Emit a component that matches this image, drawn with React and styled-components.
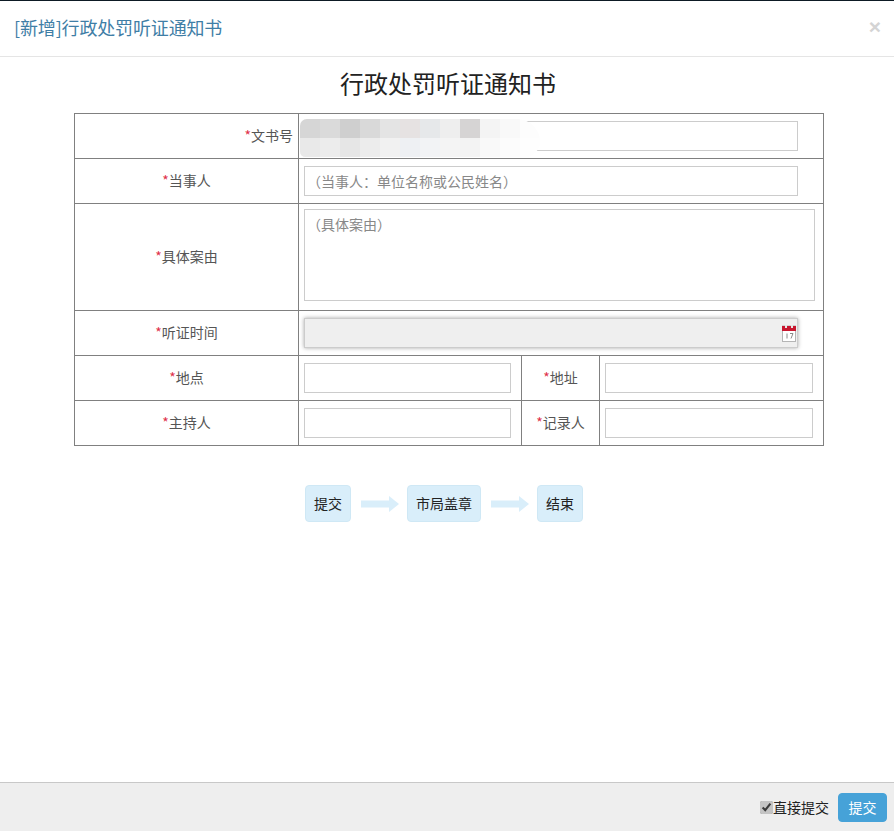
import React from "react";
import styled, { createGlobalStyle } from "styled-components";

const FONT = `"Microsoft YaHei", "Noto Sans CJK SC", "Liberation Sans", sans-serif`;

const GlobalStyle = createGlobalStyle`
  html, body {
    margin: 0;
    padding: 0;
    height: 100%;
    background: #fff;
    font-family: ${FONT};
  }
  * { box-sizing: border-box; }
`;

// grey blocks of the blurred-out document number
const mosaicRows = [
  ["#d6d6d6", "#dadada", "#cfcfcf", "#d9d9d9", "#e4e4e4", "#e6e2e2", "#e6e8ea", "#eeeeee", "#d6d4d4", "#f4f4f4", "#f9f9f9", "#fdfdfd"],
  ["#e9e9e9", "#ececec", "#e6e6e6", "#ececec", "#f1f1f1", "#eef0f3", "#f2f3f5", "#f4f4f4", "#f3f3f3", "#f9f9f9", "#fcfcfc", "#fefefe"],
];

export default function App() {
  return (
    <Modal>
      <GlobalStyle />
      <TopEdge />
      <Header>
        <Title>[新增]行政处罚听证通知书</Title>
        <CloseMark>×</CloseMark>
      </Header>
      <Body>
        <DocTitle>行政处罚听证通知书</DocTitle>
        <FormTable>
          <colgroup>
            <col style={{ width: 224 }} />
            <col style={{ width: 223 }} />
            <col style={{ width: 78 }} />
            <col style={{ width: 224 }} />
          </colgroup>
          <tbody>
            <Row $h={45}>
              <LabelCell $right><Req>*</Req>文书号</LabelCell>
              <FieldCell colSpan={3}>
                <BlurWrap>
                  <WideInput />
                  <Mosaic>
                    {mosaicRows.map((row, i) => (
                      <MosaicRow key={i}>
                        {row.map((c, j) => <MosaicBlock key={j} $c={c} />)}
                      </MosaicRow>
                    ))}
                  </Mosaic>
                </BlurWrap>
              </FieldCell>
            </Row>
            <Row $h={45}>
              <LabelCell><Req>*</Req>当事人</LabelCell>
              <FieldCell colSpan={3}>
                <WideInput placeholder="（当事人：单位名称或公民姓名）" />
              </FieldCell>
            </Row>
            <Row $h={107}>
              <LabelCell><Req>*</Req>具体案由</LabelCell>
              <AreaCell colSpan={3}>
                <Area placeholder="（具体案由）" />
              </AreaCell>
            </Row>
            <Row $h={45}>
              <LabelCell><Req>*</Req>听证时间</LabelCell>
              <FieldCell colSpan={3}>
                <DateWrap>
                  <DateInput disabled />
                  <CalendarIcon />
                </DateWrap>
              </FieldCell>
            </Row>
            <Row $h={45}>
              <LabelCell><Req>*</Req>地点</LabelCell>
              <FieldCell><HalfInput /></FieldCell>
              <LabelCell><Req>*</Req>地址</LabelCell>
              <FieldCell><HalfInput $wide /></FieldCell>
            </Row>
            <Row $h={45}>
              <LabelCell><Req>*</Req>主持人</LabelCell>
              <FieldCell><HalfInput /></FieldCell>
              <LabelCell><Req>*</Req>记录人</LabelCell>
              <FieldCell><HalfInput $wide /></FieldCell>
            </Row>
          </tbody>
        </FormTable>
        <Flow>
          <Step>提交</Step>
          <FlowArrow />
          <Step>市局盖章</Step>
          <FlowArrow />
          <Step>结束</Step>
        </Flow>
      </Body>
      <Footer>
        <CheckLabel>
          <Check type="checkbox" defaultChecked />
          直接提交
        </CheckLabel>
        <SubmitButton>提交</SubmitButton>
      </Footer>
    </Modal>
  );
}

function FlowArrow() {
  return (
    <ArrowSvg width="38" height="16" viewBox="0 0 38 16">
      <path d="M0 4.5h28V0l10 8-10 8v-4.5H0z" fill="#d9eefa" />
    </ArrowSvg>
  );
}

function CalendarIcon() {
  return (
    <CalSvg width="14" height="17" viewBox="0 0 14 17">
      <rect x="0.5" y="1" width="13" height="15.5" fill="#fff" stroke="#b5b5b5" />
      <rect x="0" y="1" width="14" height="5" fill="#c8162e" />
      <rect x="3" y="0" width="2" height="3" fill="#e6e6e6" />
      <rect x="9" y="0" width="2" height="3" fill="#e6e6e6" />
      <path d="M5 8.5v5M8 8.5h3l-2 5" fill="none" stroke="#8a8a8a" strokeWidth="1" />
    </CalSvg>
  );
}

const Modal = styled.div`
  width: 894px;
  height: 831px;
  display: flex;
  flex-direction: column;
  position: relative;
  overflow: hidden;
  background: #fff;
`;
const TopEdge = styled.div`
  height: 1px;
  flex: none;
  background: #0d1a24;
`;
const Header = styled.header`
  height: 56px;
  flex: none;
  display: flex;
  align-items: center;
  justify-content: space-between;
  padding: 0 13px 4px 14px;
  border-bottom: 1px solid #e5e5e5;
`;
const Title = styled.h4`
  margin: 0;
  font-size: 18px;
  font-weight: 400;
  letter-spacing: -0.15px;
  color: #3f7ea6;
`;
const CloseMark = styled.span`
  font-family: "Liberation Sans", sans-serif;
  font-size: 21px;
  font-weight: 700;
  line-height: 1;
  color: #d4d4d4;
`;
const Body = styled.main`
  flex: 1;
  display: flex;
  flex-direction: column;
  align-items: center;
`;
const DocTitle = styled.h2`
  margin: 0 0 0 2px;
  height: 56px;
  line-height: 52px;
  font-size: 24px;
  font-weight: 400;
  color: #222;
`;
const FormTable = styled.table`
  width: 750px;
  table-layout: fixed;
  border-collapse: collapse;
  align-self: flex-start;
  margin-left: 74px;
`;
const Row = styled.tr`
  height: ${(p) => p.$h}px;
`;
const LabelCell = styled.td`
  border: 1px solid #808080;
  padding: 0 ${(p) => (p.$right ? "5px" : "0")} 2px 0;
  font-size: 14px;
  color: #555;
  text-align: ${(p) => (p.$right ? "right" : "center")};
  vertical-align: middle;
`;
const Req = styled.span`
  color: #e0304a;
`;
const FieldCell = styled.td`
  border: 1px solid #808080;
  padding: 0 5px;
  vertical-align: middle;
`;
const AreaCell = styled(FieldCell)`
  padding-bottom: 5px;
`;
const inputBase = `
  display: block;
  height: 30px;
  padding: 0 0 0 2px;
  border: 1px solid #ccc;
  background: #fff;
  font-family: ${FONT};
  font-size: 14px;
  color: #555;
  outline: none;
  &::placeholder { color: #888; opacity: 1; }
`;
const WideInput = styled.input`
  ${inputBase}
  width: 494px;
`;
const HalfInput = styled.input`
  ${inputBase}
  width: ${(p) => (p.$wide ? 208 : 207)}px;
`;
const Area = styled.textarea`
  ${inputBase}
  width: 511px;
  height: 92px;
  padding: 4px 0 0 2px;
  resize: none;
`;
const BlurWrap = styled.div`
  position: relative;
`;
const Mosaic = styled.div`
  position: absolute;
  left: -4px;
  top: -2px;
  width: 240px;
  height: 38px;
  display: flex;
  flex-direction: column;
  border-radius: 18px 60px 40px 14px;
  overflow: hidden;
  filter: blur(0.6px);
`;
const MosaicRow = styled.div`
  flex: 1;
  display: flex;
`;
const MosaicBlock = styled.div`
  flex: 1;
  background: ${(p) => p.$c};
`;
const DateWrap = styled.div`
  position: relative;
  width: 494px;
`;
const DateInput = styled.input`
  ${inputBase}
  width: 100%;
  background: #efefef;
  box-shadow: 0 0 4px rgba(0, 0, 0, 0.35);
`;
const CalSvg = styled.svg`
  position: absolute;
  right: 2px;
  top: 7px;
`;
const Flow = styled.div`
  display: flex;
  align-items: center;
  margin-top: 39px;
  margin-right: 6px;
`;
const Step = styled.div`
  height: 37px;
  padding: 0 8px 2px;
  display: flex;
  align-items: center;
  background: #d9eefa;
  border: 1px solid #cfe8f5;
  border-radius: 4px;
  font-size: 14px;
  color: #222;
`;
const ArrowSvg = styled.svg`
  flex: none;
  margin: 0 8px 0 10px;
`;
const Footer = styled.footer`
  height: 49px;
  flex: none;
  display: flex;
  align-items: center;
  justify-content: flex-end;
  gap: 9px;
  padding: 0 7px 0 0;
  background: #eee;
  border-top: 1px solid #c8c8c8;
`;
const CheckLabel = styled.label`
  display: flex;
  align-items: center;
  font-size: 14px;
  color: #222;
`;
const Check = styled.input`
  width: 13px;
  height: 13px;
  margin: 0;
  accent-color: #c4c4c4;
`;
const SubmitButton = styled.button`
  width: 49px;
  height: 29px;
  border: 1px solid #46a2d8;
  border-radius: 4px;
  background: #46a2d8;
  color: #fff;
  font-family: ${FONT};
  font-size: 14px;
  padding: 0;
`;
